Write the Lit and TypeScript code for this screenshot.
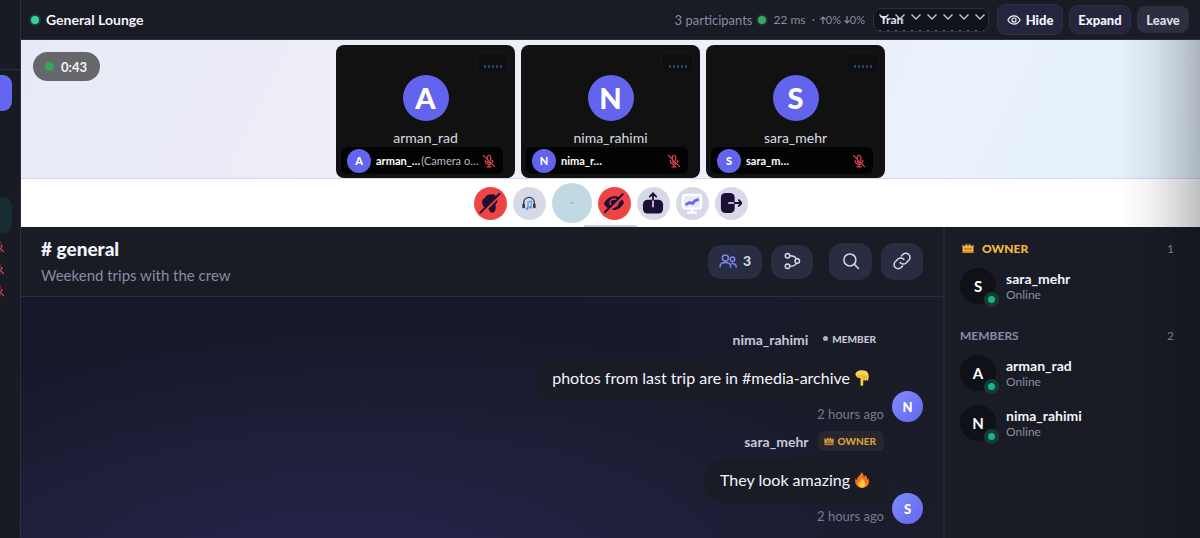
import { LitElement, html, svg, css, nothing } from "lit";
import { customElement, property } from "lit/decorators.js";

const mutedMic = html`<svg class="mic" viewBox="0 0 24 24" fill="none" stroke="currentColor" stroke-width="2" stroke-linecap="round" aria-hidden="true">
  <path d="M9 9V5.500a3 3 0 0 1 6 0v5.500M14 14.200A3 3 0 0 1 9 12M5.500 11a6.500 6.500 0 0 0 10.500 5.300M18.500 11c0 1.200-.3 2.300-.8 3.200M12 18v4M8.500 22h7M2.500 2.500l19 19" />
</svg>`;

const crown = (mono: boolean) => html`<svg class="crown" viewBox="0 0 24 24" aria-hidden="true">
  <path fill=${mono ? "#d9a23c" : "#f5b83d"} d="M1 5l4.500 4L8 3l3 5.500L12 1l1 7.500L16 3l2.500 6L23 5v13H1z" />
  <path fill=${mono ? "#b9832c" : "#e08a1e"} d="M1 18h22v4H1z" />
  ${mono
    ? svg`<path stroke="#54401f" stroke-width="1.500" d="M3 17h18M8 10v6M12 10v6M16 10v6" />`
    : svg`<circle cx="7" cy="14" r="1.800" fill="#d8365d" /><circle cx="12" cy="14" r="2" fill="#5a9b45" /><circle cx="17" cy="14" r="1.800" fill="#d8365d" />`}
</svg>`;

const pointDown = html`<svg class="emoji" viewBox="0 0 24 24" role="img" aria-label="pointing down">
  <path fill="#fbd04b" d="M8 .8C11 .2 15 .3 18 1.500c2.500 1.200 3.800 4 4 7.500.1 2.500-.2 5-1 6.500-.7 1.200-2.300.8-2.500-.5-.6 1.200-2.400 1-2.800 0-.4.8-1.200 1.200-1.900 1V22c0 2.400-4 2.400-4 0v-9.500C5.500 12.500 2.500 10 2 6.500 2.500 3.500 5 1.200 8 .8z" />
  <path fill="none" stroke="#d99a25" stroke-width="1.100" stroke-linecap="round" d="M13.700 15.500V9M16 14V9M18.700 14V9M5 8c2 2 5.500 1.500 8-.5" />
</svg>`;

const fire = html`<svg class="emoji" viewBox="0 0 24 24" role="img" aria-label="fire">
  <path fill="#f4731c" d="M11 .5c3 2 3.800 4.500 3.600 7.500C16 7 16.500 5.500 16.200 4c2.800 2 4 5 3.800 8 .9-.7 1.300-1.800 1.300-3C24.500 16 21 23.500 12 23.500S-.2 15.500 2.800 8.500c.2 1.700.7 2.800 1.700 3.700C4.300 7 9.800 6 11 .5z" />
  <path fill="#ffc93a" d="M12.500 9c.2 3 4.500 4.500 4.500 9 0 3.500-2.200 5.500-5 5.500S6.500 21.500 6.500 18c0-2 .9-3.300 1.700-4.300.3 1.300.9 2 1.700 2.300C9.700 13 10.500 11 12.500 9z" />
</svg>`;

const glyphs = {
  micOff: svg`<path fill="#1d0f35" d="M3.500 10c0-2 1.500-3.200 3-3.200C7.200 3.800 10 2.200 12.500 2.700c3-1 7 .8 7 4.500 1.500 3-.2 5.300-1.500 6.500.8 2.800-.2 4.300-.2 6.300-.5 3-5.300 3.500-6.300.5-.5-1.500-1.500-2.500-3-3C5 17 3 13.500 3.500 10z" /><path stroke="#ef4444" stroke-width="3.500" d="M2.500 23.500L23 3" /><path stroke="#1d0f35" stroke-width="2.200" stroke-linecap="round" d="M1.500 22.500L22.500 2" />`,
  headphones: svg`<path fill="none" stroke="#353846" stroke-width="2" d="M4 15V11.500a8 8 0 0 1 16 0V15" /><rect x="2" y="13" width="4" height="7" rx="1.500" fill="#353846" /><rect x="18" y="13" width="4" height="7" rx="1.500" fill="#353846" /><path fill="none" stroke="#48a0e8" stroke-width="1.800" d="M10.500 20V10.500l5-1.500v9" /><circle cx="9" cy="20.500" r="2" fill="#48a0e8" /><circle cx="14" cy="18.500" r="2" fill="#48a0e8" />`,
  eyeOff: svg`<path fill="#1d0f35" d="M1 12.500C4 7 8 4.500 13 4.500c4.500 0 8 2.500 10 7-2.500 5-6.500 8-11 8-5 0-9-2.500-11-7z" /><circle cx="12" cy="12" r="4.300" fill="none" stroke="#ef4444" stroke-width="1.500" /><path stroke="#ef4444" stroke-width="3.500" d="M3.500 23L22.500 4" /><path stroke="#1d0f35" stroke-width="2.200" stroke-linecap="round" d="M2 22L21.500 2.500" />`,
  share: svg`<rect x="1" y="8.500" width="22" height="15" rx="5" fill="#1d0f35" /><path stroke="#d7d8e8" stroke-width="1.800" d="M12 8.500v8" /><path fill="none" stroke="#1d0f35" stroke-width="2" stroke-linecap="round" d="M12 8.500V1.500M8.500 5L12 1.500 15.500 5" />`,
  board: svg`<rect x="2" y="3" width="20" height="15" rx="2.500" fill="#e8eaf6" stroke="#fff" stroke-width="2.400" /><path d="M12 19v3M7.500 22.500h9" stroke="#fff" stroke-width="2.400" stroke-linecap="round" /><path fill="none" stroke="#6c63e8" stroke-width="3" stroke-linejoin="round" d="M5 14l4-2.500 4 1 2-3 4.500-1.500" />`,
  exit: svg`<rect x="1" y="1" width="15" height="22" rx="5" fill="#1d0f35" /><path stroke="#d7d8e8" stroke-width="1.800" d="M9 12h7" /><path fill="none" stroke="#1d0f35" stroke-width="2" stroke-linecap="round" stroke-linejoin="round" d="M16 12h7.500M20.500 8.800L23.700 12l-3.200 3.200" />`,
};

const controls = [
  { label: "Unmute microphone", kind: "danger", glyph: glyphs.micOff },
  { label: "Audio settings", kind: "small", glyph: glyphs.headphones },
  { label: "Reactions", kind: "wide", glyph: null },
  { label: "Turn camera on", kind: "danger", glyph: glyphs.eyeOff },
  { label: "Share screen", kind: "", glyph: glyphs.share },
  { label: "Whiteboard", kind: "", glyph: glyphs.board },
  { label: "Leave call", kind: "", glyph: glyphs.exit },
];

const participants = [
  { name: "arman_rad", short: "arman_…", note: "(Camera o…" },
  { name: "nima_rahimi", short: "nima_r…", note: "" },
  { name: "sara_mehr", short: "sara_m…", note: "" },
];

const base = css`
  :host { box-sizing: border-box; font-family: Lato, "Liberation Sans", sans-serif; }
  *, *::before, *::after { box-sizing: border-box; }
  button, select { font: inherit; color: inherit; margin: 0; padding: 0; border: 0; cursor: pointer; }
  h1, h2, p { margin: 0; padding: 0; }
  svg { display: block; flex: none; }
`;

@customElement("video-tile")
class VideoTile extends LitElement {
  @property() name = "";
  @property() short = "";
  @property() note = "";

  static styles = [base, css`
    :host { position: relative; display: flex; flex-direction: column; align-items: center; flex: 0 1 179px; min-width: 0; height: 133px; padding-top: 30px; border-radius: 8px; background: #111112; color: #dcdce2; overflow: hidden; }
    .avatar { display: grid; place-items: center; width: 46px; height: 46px; border-radius: 50%; background: #6264ee; color: #fff; font-size: 29px; font-weight: 900; line-height: 46px; }
    .name { margin-top: 8px; font-size: 14px; line-height: 18px; }
    .signal { position: absolute; top: 7px; right: 6px; display: flex; align-items: flex-end; justify-content: center; gap: 2px; width: 33px; height: 22px; padding-bottom: 5px; border: 1px solid #15171b; border-radius: 6px; background: #0e0f11; }
    .signal i { width: 2px; height: 3px; background: #2e405e; }
    .bar { position: absolute; left: 5px; bottom: 4px; right: 12px; display: flex; align-items: center; height: 27px; padding: 0 7px 0 6px; border-radius: 6px; background: #030304; font-size: 11px; }
    .mini { display: grid; place-items: center; width: 24px; height: 24px; margin-right: 5px; border-radius: 50%; background: #6264ee; color: #fff; font-weight: 900; }
    .short { color: #fff; font-weight: 700; }
    .note { margin-left: 1px; color: #b9bac4; }
    .mic { width: 14px; height: 14px; margin-left: auto; color: #e5484d; }
  `];

  render() {
    const initial = this.name.charAt(0).toUpperCase();
    return html`
      <span class="avatar">${initial}</span>
      <span class="name">${this.name}</span>
      <span class="signal"><i></i><i></i><i></i><i></i><i></i></span>
      <div class="bar">
        <span class="mini">${initial}</span><span class="short">${this.short}</span>
        ${this.note ? html`<span class="note">${this.note}</span>` : nothing}
        ${mutedMic}
      </div>`;
  }
}

@customElement("chat-message")
class ChatMessage extends LitElement {
  @property() name = "";
  @property() rank = "";
  @property() text = "";
  @property() emoji = "";

  static styles = [base, css`
    :host { display: flex; align-items: flex-end; justify-content: flex-end; gap: 8px; }
    .body { display: flex; flex-direction: column; align-items: flex-end; min-width: 0; }
    .head { display: flex; align-items: center; gap: 9px; height: 20px; margin-bottom: 8px; color: #c6c8d8; font-size: 14px; font-weight: 700; }
    .badge { display: flex; align-items: center; gap: 4px; height: 20px; padding: 0 8px 1px 6px; border-radius: 6px; color: #c6c8d8; font-size: 10px; font-weight: 900; }
    .owner { background: #292630; color: #d9a23c; }
    .dot { width: 5px; height: 5px; border-radius: 50%; background: #aeb1c4; }
    .crown { width: 10px; height: 10px; }
    .bubble { display: flex; align-items: center; gap: 4px; min-height: 44px; padding: 7px 14px 9px 16px; border-radius: 20px 20px 4px 20px; background: #191b25; color: #f3f4fb; font-size: 16px; line-height: 20px; }
    .emoji { width: 16px; height: 16px; }
    .time { margin-top: 5px; color: #777a8f; font-size: 13px; line-height: 16px; }
    .avatar { display: grid; flex: none; place-items: center; width: 31px; height: 31px; border-radius: 50%; background: linear-gradient(135deg, #818cf8, #6366f1); color: #fff; font-size: 13px; font-weight: 900; }
  `];

  render() {
    const owner = this.rank === "OWNER";
    return html`
      <div class="body">
        <div class="head">
          <span>${this.name}</span>
          <span class="badge ${owner ? "owner" : ""}">${owner ? crown(true) : html`<i class="dot"></i>`}${this.rank}</span>
        </div>
        <p class="bubble"><span>${this.text}</span>${this.emoji === "fire" ? fire : pointDown}</p>
        <span class="time">2 hours ago</span>
      </div>
      <span class="avatar">${this.name.charAt(0).toUpperCase()}</span>`;
  }
}

@customElement("member-row")
class MemberRow extends LitElement {
  @property() name = "";

  static styles = [base, css`
    :host { display: flex; align-items: center; gap: 10px; height: 50px; }
    .avatar { position: relative; display: grid; place-items: center; width: 36px; height: 36px; border-radius: 50%; background: #101116; color: #fff; font-size: 15px; font-weight: 700; }
    .status { position: absolute; right: -3px; bottom: -3px; width: 15px; height: 15px; border: 4px solid #163a38; border-radius: 50%; background: #19b583; }
    .name { color: #f3f4fb; font-size: 14px; font-weight: 700; line-height: 17px; }
    .state { color: #898ca0; font-size: 12px; line-height: 16px; }
  `];

  render() {
    return html`
      <span class="avatar">${this.name.charAt(0).toUpperCase()}<i class="status"></i></span>
      <div><div class="name">${this.name}</div><div class="state">Online</div></div>`;
  }
}

@customElement("app-root")
class AppRoot extends LitElement {
  static styles = [base, css`
    :host { display: grid; grid-template-columns: 21px minmax(0, 1fr); height: 100vh; overflow: hidden; background: #191b25; color: #f3f4fb; }
    .rail { display: flex; flex-direction: column; border-right: 1px solid #2b2e3d; overflow: hidden; background: #181a24; }
    .rail-top { flex: none; height: 70px; border-bottom: 1px solid #2b2e3d; }
    .rail-active { flex: none; width: 12px; height: 36px; margin-top: 5px; border-radius: 0 9px 9px 0; background: #6466f1; }
    .rail-voice { flex: none; width: 12px; height: 36px; margin-top: 86px; border-radius: 0 9px 9px 0; background: #182d31; }
    .rail-mics { display: grid; gap: 8px; width: 5px; margin-top: 6px; justify-content: end; color: #e5484d; }
    .rail-mics .mic { width: 14px; height: 14px; }

    .main { display: flex; flex-direction: column; min-width: 0; position: relative; }
    .topbar { display: flex; flex: none; align-items: center; height: 40px; padding: 0 11px 0 10px; border-bottom: 1px solid #2b2e3d; background: #191b25; }
    .live { width: 8px; height: 8px; border-radius: 50%; background: #34d399; box-shadow: 0 0 0 2px #174238; }
    .room { margin-left: 7px; font-size: 14px; font-weight: 700; }
    .stats { display: flex; align-items: center; margin-left: auto; color: #898ca0; font-size: 13px; white-space: pre; }
    .net { width: 8px; height: 8px; margin: 0 7px 0 6px; border-radius: 50%; background: #39aa60; box-shadow: 0 0 0 2px #1b3330; }
    .ping { font-size: 12px; }
    .loss { margin-left: 5px; font-size: 11px; }
    .arrow { font-family: "Open Sans", "Liberation Sans", sans-serif; }
    .arrow { display: inline-block; width: 6px; height: 8px; }
    .lang { appearance: none; width: 116px; height: 24px; margin-left: 8px; padding: 0 84px 0 6px; border: 1px solid #2b2e3d; border-radius: 8px; background: #11131c url("data:image/svg+xml,%3Csvg xmlns='http://www.w3.org/2000/svg' width='16' height='16'%3E%3Cpath d='M3.500 5.500l4.500 4.500 4.500-4.500' fill='none' stroke='%23c6c8d8' stroke-width='1.400'/%3E%3C/svg%3E") 2px 0 / 16px 16px; color: #e2e3ee; font-size: 12px; font-weight: 700; text-overflow: clip; }
    .btn { display: flex; align-items: center; justify-content: center; height: 29px; margin-left: 6px; padding: 0; border: 1px solid #2c2d48; border-radius: 8px; background: #25263d; font-size: 13px; font-weight: 900; }
    .hide { gap: 5px; width: 66px; height: 31px; margin-left: 8px; }
    .expand { width: 62px; }
    .leave { width: 52px; height: 27px; border-color: #2b2f3e; background: #2b2f3e; color: #d9dbe7; }

    .stage { position: relative; display: flex; flex: none; justify-content: center; gap: 6px; height: 139px; padding: 5px 8px 0; border-bottom: 1px solid #d5d7ea; background: linear-gradient(115deg, #e8eaf6 0%, #efeff8 45%, #e8f1fc 80%, #e3effb 100%); }
    .timer { position: absolute; left: 12px; top: 12px; display: flex; align-items: center; gap: 7px; height: 29px; padding: 0 13px 0 12px; border-radius: 15px; background: #66676b; font-size: 13px; font-weight: 700; }
    .timer i { width: 9px; height: 9px; border-radius: 50%; background: #38a556; }
    .controls { position: relative; display: flex; flex: none; align-items: center; justify-content: center; gap: 6px; height: 48px; background: #fff; }
    .ctl { display: grid; place-items: center; width: 33px; height: 33px; border-radius: 50%; background: #d7d8e8; }
    .ctl svg { width: 22px; height: 22px; }
    .small svg { width: 16px; height: 16px; }
    .danger { background: #ef4444; }
    .wide { width: 40px; height: 40px; background: #c0d9e2; }
    .spark { width: 4px; height: 2px; background: #7ed8d6; }
    .grip { position: absolute; left: 50%; bottom: 0; width: 53px; height: 2px; margin-left: -27px; background: #cfcfd6; }
    .shade { position: absolute; top: 40px; right: 0; bottom: 0; width: 80px; pointer-events: none; background: linear-gradient(90deg, rgba(10, 12, 18, 0), rgba(10, 12, 18, 0.06) 40%, rgba(10, 12, 18, 0.17) 75%, rgba(10, 12, 18, 0.26)); }

    .lower { display: grid; flex: 1; grid-template-columns: minmax(0, 1fr) 257px; min-height: 0; }
    .chat { display: flex; flex-direction: column; min-width: 0; min-height: 0; }
    .chat-head { display: flex; flex: none; align-items: center; height: 70px; padding: 0 20px; border-bottom: 1px solid #2b2e3d; background: #191b25; }
    .title { font-size: 19px; font-weight: 900; line-height: 26px; }
    .topic { color: #898ca0; font-size: 15px; line-height: 26px; }
    .tools { display: flex; align-items: center; gap: 9px; margin-left: auto; }
    .tool { display: grid; place-items: center; width: 42px; height: 34px; padding-bottom: 2px; border-radius: 13px; background: #282d42; color: #d5d7e5; }
    .tool svg { width: 18px; height: 18px; }
    .people { display: flex; align-items: center; justify-content: center; gap: 6px; width: 54px; font-size: 14px; font-weight: 900; }
    .people svg { color: #8385ef; }
    .tall { height: 37px; }
    .split { width: 43px; margin-left: 7px; }
    .log { display: flex; flex: 1; flex-direction: column; gap: 9px; min-height: 0; overflow: hidden; padding: 32px 20px 12px; background: radial-gradient(ellipse 70% 110% at 35% 120%, #262451 0%, #1f203b 50%, rgba(24, 26, 40, 0) 100%), linear-gradient(90deg, #15172a 0%, #181a2b 70%, #1a1c28 100%); }

    .members { min-height: 0; padding: 11px 26px 0 15px; border-left: 2px solid #242736; background: #191b25; overflow: hidden; }
    .group { display: flex; align-items: center; height: 20px; margin-bottom: 3px; color: #898ca8; font-size: 12px; font-weight: 700; }
    .group .crown { width: 12px; height: 12px; margin-right: 8px; margin-left: 2px; }
    .gold { color: #f5b83d; font-weight: 900; }
    .count { margin-left: auto; color: #898ca0; font-weight: 400; }
    .members section + section { margin-top: 14px; }
  `];

  render() {
    return html`
      <aside class="rail">
        <div class="rail-top"></div>
        <div class="rail-active"></div>
        <div class="rail-voice"></div>
        <div class="rail-mics">${mutedMic}${mutedMic}${mutedMic}</div>
      </aside>
      <main class="main">
        <header class="topbar">
          <i class="live"></i>
          <span class="room">General Lounge</span>
          <div class="stats">
            <span>3 participants</span><i class="net"></i><span class="ping">22 ms  ·</span><span class="loss"><svg class="arrow" viewBox="0 0 6 8" fill="none" stroke="currentColor" stroke-width="1.200" role="img" aria-label="up"><path d="M3 8V1M.5 3.500L3 1l2.500 2.500" /></svg>0% <svg class="arrow" viewBox="0 0 6 8" fill="none" stroke="currentColor" stroke-width="1.200" role="img" aria-label="down"><path d="M3 0v7M.5 4.500L3 7l2.500-2.500" /></svg>0%</span>
          </div>
          <select class="lang" aria-label="Connection mode"><option>Transport</option></select>
          <button class="btn hide">
            <svg width="14" height="14" viewBox="0 0 24 24" fill="none" stroke="currentColor" stroke-width="2" aria-hidden="true"><path d="M1.500 12C4 7.500 7.500 5 12 5s8 2.500 10.500 7C20 16.500 16.500 19 12 19S4 16.500 1.500 12z" /><circle cx="12" cy="12" r="3.500" /></svg>Hide
          </button>
          <button class="btn expand">Expand</button>
          <button class="btn leave">Leave</button>
        </header>
        <section class="stage">
          ${participants.map((p) => html`<video-tile .name=${p.name} .short=${p.short} .note=${p.note}></video-tile>`)}
          <div class="timer"><i></i>0:43</div>
        </section>
        <nav class="controls" aria-label="Call controls">
          ${controls.map((c) => html`<button class="ctl ${c.kind}" aria-label=${c.label}>
            ${c.glyph ? html`<svg viewBox="0 0 24 24" fill="none">${c.glyph}</svg>` : html`<i class="spark"></i>`}
          </button>`)}
          <i class="grip"></i>
        </nav>
        <div class="lower">
          <section class="chat">
            <header class="chat-head">
              <div><h1 class="title"># general</h1><p class="topic">Weekend trips with the crew</p></div>
              <div class="tools">
                <button class="tool people" aria-label="3 members">
                  <svg viewBox="0 0 24 24" fill="none" stroke="currentColor" stroke-width="2" stroke-linecap="round"><circle cx="8.500" cy="8" r="4" /><circle cx="18" cy="9.500" r="3" /><path d="M1.500 20v-1c0-3 3-5 7-5s7 2 7 5v1M17 15.500c3.500-.3 6 1.500 6 4.500" /></svg>3
                </button>
                <button class="tool" aria-label="Threads">
                  <svg viewBox="0 0 24 24" fill="none" stroke="currentColor" stroke-width="2"><circle cx="6" cy="5" r="3" /><circle cx="6" cy="19" r="3" /><circle cx="19" cy="12" r="3" /><path d="M9 5c5 0 8 2 9 4M9 19c5 0 8-2 9-4" /></svg>
                </button>
                <button class="tool tall split" aria-label="Search">
                  <svg viewBox="0 0 24 24" fill="none" stroke="currentColor" stroke-width="2" stroke-linecap="round"><circle cx="10.500" cy="10.500" r="8" /><path d="M16.500 16.500L22 22" /></svg>
                </button>
                <button class="tool tall" aria-label="Copy link">
                  <svg viewBox="0 0 24 24" fill="none" stroke="currentColor" stroke-width="2" stroke-linecap="round"><path d="M9.500 14a5.500 5.500 0 0 0 8 .6l3.500-3.500a5.500 5.500 0 0 0-7.800-7.800l-2 2" /><path d="M14.500 10a5.500 5.500 0 0 0-8-.6L3 12.900a5.500 5.500 0 0 0 7.800 7.800l2-2" /></svg>
                </button>
              </div>
            </header>
            <div class="log">
              <chat-message name="nima_rahimi" rank="MEMBER" text="photos from last trip are in #media-archive" emoji="point"></chat-message>
              <chat-message name="sara_mehr" rank="OWNER" text="They look amazing" emoji="fire"></chat-message>
            </div>
          </section>
          <aside class="members">
            <section>
              <h2 class="group gold">${crown(false)}OWNER<span class="count">1</span></h2>
              <member-row name="sara_mehr"></member-row>
            </section>
            <section>
              <h2 class="group">MEMBERS<span class="count">2</span></h2>
              <member-row name="arman_rad"></member-row>
              <member-row name="nima_rahimi"></member-row>
            </section>
          </aside>
        </div>
        <div class="shade"></div>
      </main>`;
  }
}
